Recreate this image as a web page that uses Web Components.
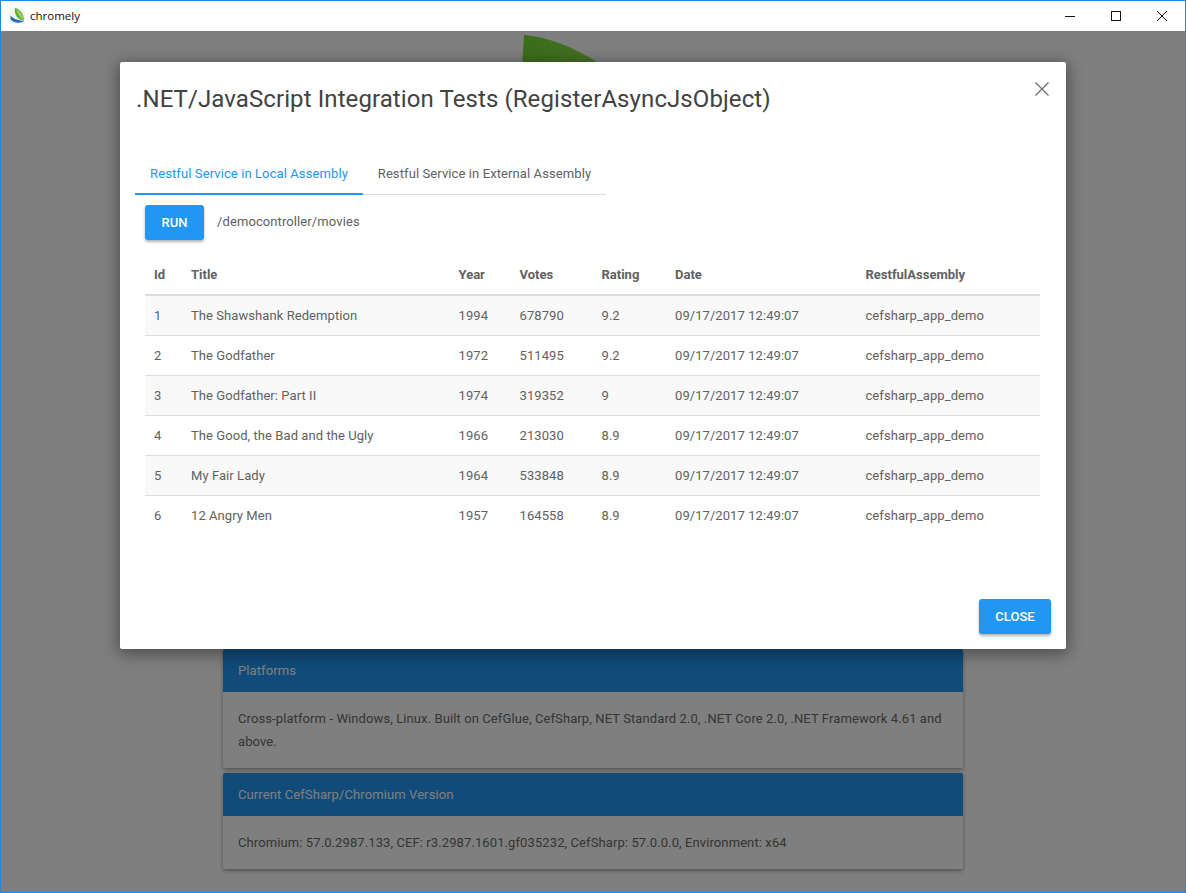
<!DOCTYPE html>
<html><head><meta charset="utf-8">
<style>
html,body{margin:0;padding:0;height:100%}
body{font-family:Roboto,"Liberation Sans",sans-serif;background:#fff;overflow:hidden;letter-spacing:.1px}
</style></head>
<body>
<app-window>
  <page-content></page-content>
  <modal-dialog></modal-dialog>
</app-window>
<script>
function def(name, html, init){
  customElements.define(name, class extends HTMLElement{
    constructor(){super();this.attachShadow({mode:'open'}).innerHTML=html;}
    connectedCallback(){ if(init) init(this); }
  });
}
def('title-bar',`<style>
:host{display:flex;align-items:center;height:30px;background:#fff;flex:none;position:relative;color:#000}
.ico{margin-left:8px;width:16px;height:17px;flex:none;display:block;position:relative;top:-1px}
.t{margin-left:5px;font:11.5px "Open Sans","Noto Sans",sans-serif;letter-spacing:0;color:#111;position:relative;top:-1px}
.ctl{margin-left:auto;display:flex;height:30px}
.b{width:46px;height:30px;display:flex;align-items:center;justify-content:center}
</style>
<svg class="ico" viewBox="0 0 16 17">
<rect width="16" height="17" fill="#f3f5f3"/>
<path d="M1.5 8.5C4 11.5 9 13.5 15 14 12 16.5 5 16.5 1.5 12.5Z" fill="#2670b8"/>
<path d="M6 1C11 2 15 7 15 13.5 10 13.5 4.5 8 6 1Z" fill="#5fae35"/>
<path d="M7.5 2.5C11 4 14 8 15 13.5 11.5 11 8.5 7.5 7.5 2.5Z" fill="#9ccf5c"/>
</svg>
<span class="t">chromely</span>
<div class="ctl">
<div class="b"><svg width="10" height="10" viewBox="0 0 10 10"><path d="M0 5.5H10" stroke="#111" fill="none"/></svg></div>
<div class="b"><svg width="10" height="10" viewBox="0 0 10 10"><rect x=".5" y=".5" width="9" height="9" stroke="#111" fill="none"/></svg></div>
<div class="b"><svg width="10" height="10" viewBox="0 0 10 10"><path d="M0 0L10 10M10 0L0 10" stroke="#111" fill="none"/></svg></div>
</div>`);
def('info-card',`<style>
:host{display:block;width:740px;background:#fff;border-radius:2px;box-shadow:0 2px 4px rgba(0,0,0,.35);overflow:hidden}
.h{background:#2196f3;color:#fff;height:43px;display:flex;align-items:center;padding:0 15px;box-sizing:border-box;font-size:13px}
.b{padding:15px;line-height:23px;font-size:13px;color:#6a6a6a}
</style><div class="h"><slot name="head"></slot></div><div class="b"><slot></slot></div>`);
def('page-content',`<style>
:host{display:flex;flex-direction:column;align-items:center;position:absolute;inset:0;padding-bottom:23px;box-sizing:border-box}
svg{display:block;margin-top:4px;flex:none}
.sp{flex:1}
info-card+info-card{margin-top:5px}
</style>
<svg width="152" height="120" viewBox="0 0 152 120"><defs><linearGradient id="g" x1="0" y1="0" x2="1" y2="1"><stop offset="0" stop-color="#70dc30"/><stop offset="1" stop-color="#a8e468"/></linearGradient></defs>
<path d="M7 0C32 2 58 13 80 27L100 120 0 120Z" fill="url(#g)"/></svg>
<div class="sp"></div>
<info-card><span slot="head">Platforms</span>Cross-platform - Windows, Linux. Built on CefGlue, CefSharp, NET Standard 2.0, .NET Core 2.0, .NET Framework 4.61 and above.</info-card>
<info-card><span slot="head">Current CefSharp/Chromium Version</span>Chromium: 57.0.2987.133, CEF: r3.2987.1601.gf035232, CefSharp: 57.0.0.0, Environment: x64</info-card>`);
def('raised-button',`<style>
:host{display:inline-flex;align-items:center;justify-content:center;height:35px;background:#2196f3;color:#fff;border-radius:3px;font-size:13px;font-weight:500;letter-spacing:0;box-shadow:0 2px 3px rgba(0,0,0,.3);box-sizing:border-box;flex:none}
</style><slot></slot>`);
def('tab-bar',`<style>
:host{display:flex;width:471px;height:43px;border-bottom:1px solid #ddd;box-sizing:border-box;font-size:13px;color:#616161}
.t{display:flex;align-items:center;justify-content:center;height:43px;box-sizing:border-box;padding-top:2px;border-bottom:2px solid transparent}
.a{width:228px;color:#2196f3;border-bottom-color:#2196f3}
.i{flex:1}
</style><div class="t a">Restful Service in Local Assembly</div><div class="t i">Restful Service in External Assembly</div>`);
const rows=[[1,'The Shawshank Redemption',1994,678790,'9.2'],[2,'The Godfather',1972,511495,'9.2'],[3,'The Godfather: Part II',1974,319352,'9'],[4,'The Good, the Bad and the Ugly',1966,213030,'8.9'],[5,'My Fair Lady',1964,533848,'8.9'],[6,'12 Angry Men',1957,164558,'8.9']];
def('movie-table',`<style>
:host{display:block;width:895px;font-size:13px;color:#616161;letter-spacing:.07px}
table{border-collapse:collapse;table-layout:fixed;width:895px}
th,td{padding:0 9px;text-align:left;box-sizing:border-box;white-space:nowrap}
th{height:40px;font-weight:700;border-bottom:2px solid #ddd;letter-spacing:0}
td{height:40px;border-top:1px solid #ddd}
tbody tr:first-child td{border-top:0}
tbody tr:nth-child(odd){background:#f9f9f9}
</style><table><colgroup><col style="width:37px"><col style="width:267.5px"><col style="width:61px"><col style="width:82px"><col style="width:73.5px"><col style="width:190.5px"><col></colgroup>
<thead><tr><th>Id</th><th>Title</th><th>Year</th><th>Votes</th><th>Rating</th><th>Date</th><th>RestfulAssembly</th></tr></thead>
<tbody>${rows.map(r=>`<tr><td>${r[0]}</td><td>${r[1]}</td><td>${r[2]}</td><td>${r[3]}</td><td>${r[4]}</td><td>09/17/2017 12:49:07</td><td>cefsharp_app_demo</td></tr>`).join('')}</tbody></table>`);
def('modal-dialog',`<style>
:host{position:absolute;inset:0;background:rgba(0,0,0,.5);display:block}
.d{position:absolute;left:119px;top:31px;width:946px;height:587px;background:#fff;border-radius:2px;box-shadow:0 3px 16px 2px rgba(0,0,0,.4);display:flex;flex-direction:column;box-sizing:border-box;padding:0 15px}
h1{margin:22px 0 0 1px;font-size:24px;font-weight:400;line-height:30px;color:#424242;letter-spacing:.09px}
.x{position:absolute;right:17px;top:20px;display:block}
tab-bar{margin-top:38px}
.runrow{display:flex;align-items:center;margin:10px 0 0 10px}
.runrow raised-button{width:59px}
.path{margin-left:13px;font-size:13px;color:#616161;position:relative;top:-1px}
movie-table{margin:15px 0 0 10px}
.foot{margin-top:auto;display:flex;justify-content:flex-end;padding-bottom:15px}
.foot raised-button{width:72px}
</style><div class="d" role="dialog">
<h1>.NET/JavaScript Integration Tests (RegisterAsyncJsObject)</h1>
<svg class="x" width="14" height="14" viewBox="0 0 14 14"><path d="M.5.5L13.5 13.5M13.5.5L.5 13.5" stroke="#6e6e6e" stroke-width="1.3" fill="none"/></svg>
<tab-bar></tab-bar>
<div class="runrow"><raised-button>RUN</raised-button><span class="path">/democontroller/movies</span></div>
<movie-table></movie-table>
<div class="foot"><raised-button>CLOSE</raised-button></div>
</div>`);
def('app-window',`<style>
:host{display:flex;flex-direction:column;width:1186px;height:893px;box-sizing:border-box;border:1px solid #1e88e5;background:#fff}
.m{position:relative;flex:1;overflow:hidden}
</style><title-bar></title-bar><div class="m"><slot></slot></div>`);
</script>
</body></html>
